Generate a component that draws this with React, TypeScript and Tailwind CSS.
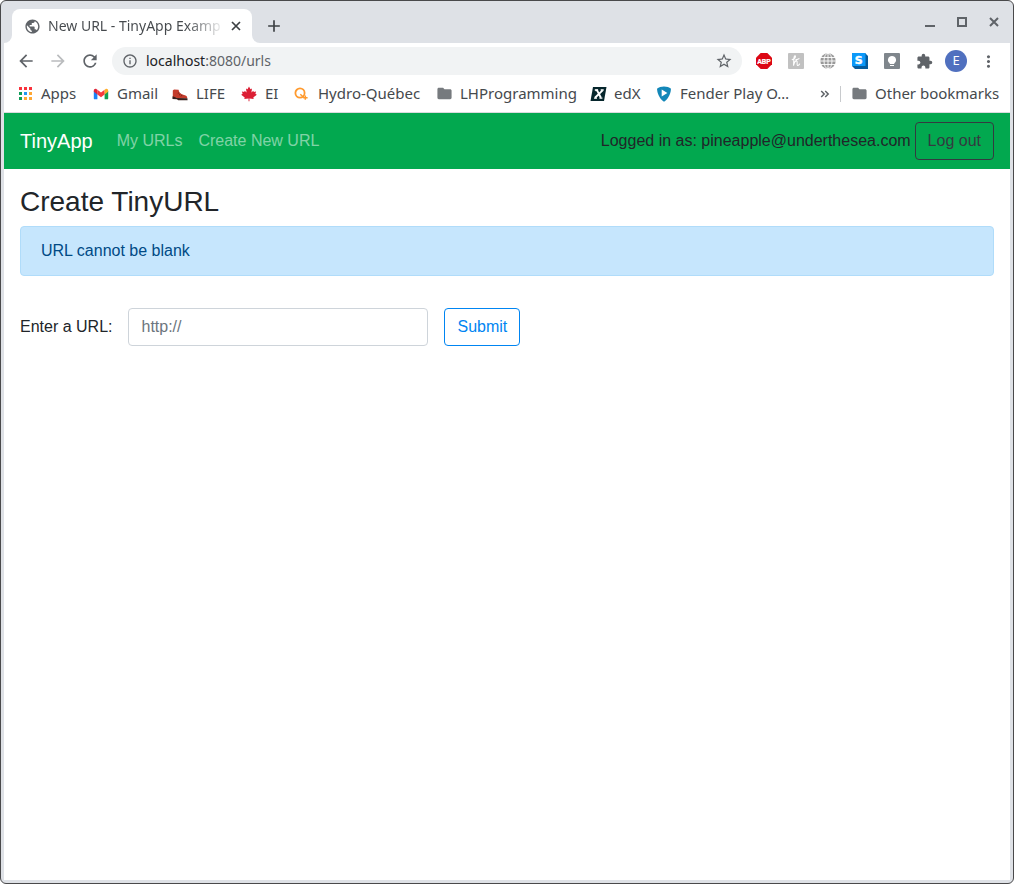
import type { ReactNode } from "react";
import {
  MdAdd,
  MdArrowBack,
  MdArrowForward,
  MdExtension,
  MdFolder,
  MdInfoOutline,
  MdMoreVert,
  MdPublic,
  MdRefresh,
  MdStarBorder,
} from "react-icons/md";

function AppsIcon() {
  const colors = ["#f9323c", "#f9323c", "#f9323c", "#0f9d58", "#2196f3", "#ffa733", "#0f9d58", "#ffa733", "#ffa733"];
  return (
    <svg width="16" height="16" viewBox="0 0 16 16" shapeRendering="crispEdges">
      {colors.map((c, i) => (
        <rect key={i} x={2 + (i % 3) * 5} y={1 + Math.floor(i / 3) * 5} width="3" height="3" fill={c} />
      ))}
    </svg>
  );
}

function GmailIcon() {
  return (
    <svg width="16" height="16" viewBox="0 0 16 16">
      <path d="M.8 5v7.400c0 .5.400.9.900.9h2.700V6.500z" fill="#1a82f5" />
      <path d="M11.600 6.500v6.800h2.700c.5 0 .9-.400.900-.9V5z" fill="#12a152" />
      <path d="M4.400 3.800 8 6.500l3.600-2.700v4.600L8 11.200 4.400 8.400z" fill="#f83a3e" />
      <path d="M11.600 3.800l.8-.6c1.200-.9 2.800 0 2.800 1.500v1L11.600 8.400z" fill="#ffae28" />
      <path d="M4.400 3.800l-.8-.6C2.400 2.300.8 3.200.8 4.700v1l3.600 2.700z" fill="#e02539" />
    </svg>
  );
}

function BootIcon() {
  return (
    <svg width="16" height="16" viewBox="0 0 16 16">
      <path d="M.8 4.400 2 3.600l4.600.1.500 2.100c1 1.700 2.600 2.700 5 3.300 2.200.5 3.100 1.300 3.200 3.200H5.400L.8 11z" fill="#c43c2c" />
      <path d="M.4 10.400c1.400.1 3 .4 4.200 1.500l10.800.3.200 2H6.200l-1.300-.9L.5 13z" fill="#38201d" />
      <path d="M7.200 6.600 5.800 7.500M8.400 8 7 9.200M10.200 8.900 9 10.400" stroke="#6e2019" strokeWidth=".9" />
    </svg>
  );
}

function LeafIcon() {
  return (
    <svg width="16" height="16" viewBox="0 0 16 16">
      <path
        d="M8 .6 9.500 3.300l1.500-.7-.6 4 1.900-1.900.5 1.200 2.300-.3-.7 2.200 1.400.9-3.500 2.900.4 1.400-4.300-.4.100 2.700H7.500l.1-2.700-4.300.4.400-1.400L.2 8.700l1.400-.9L.9 5.600l2.300.3.500-1.200 1.900 1.900-.6-4 1.500.7z"
        fill="#dc1f35"
      />
    </svg>
  );
}

function HydroIcon() {
  return (
    <svg width="16" height="16" viewBox="0 0 16 16" fill="none" stroke="#ff9a2e">
      <circle cx="6" cy="7" r="4.600" strokeWidth="1.800" />
      <path d="M6.300 8.200 9.500 11.200M11.300 9.600v4.200M9.200 11.700h4.400" strokeWidth="1.500" />
    </svg>
  );
}

function EdxIcon() {
  return (
    <svg className="shrink-0" width="17" height="16" viewBox="0 0 17 16">
      <path d="M3 1h13.500L14 15H.500z" fill="#06262c" />
      <path d="M5.600 4.400h1.500l3.800 7.400M12.600 4.400 5 11.800" fill="none" stroke="#fff" strokeWidth="1.900" />
      <path d="M4.800 4h3.300M10.700 4h3M4 12.100h3M9.400 12.100h3" stroke="#fff" strokeWidth="1.300" />
    </svg>
  );
}

function FenderIcon() {
  return (
    <svg width="16" height="16" viewBox="0 0 16 16">
      <path d="M1.200 2.600C4-.1 12-.1 14.800 2.600c.6 3.700-2.600 10.900-6.800 13.100C3.800 13.500.6 6.300 1.200 2.600z" fill="#1387b8" />
      <path d="M5.700 3.600v7L11.400 7z" fill="#fff" />
    </svg>
  );
}

function AdblockIcon() {
  return (
    <svg width="16" height="16" viewBox="0 0 16 16">
      <path d="M4.700 0h6.600L16 4.700v6.600L11.300 16H4.700L0 11.300V4.700z" fill="#dc0714" />
      <text x="8" y="11" textAnchor="middle" fontSize="7" fontWeight="700" fontFamily="Roboto, sans-serif" fill="#fff" stroke="#fff" strokeWidth=".2">
        ABP
      </text>
    </svg>
  );
}

function HoneyIcon() {
  return (
    <svg width="16" height="16" viewBox="0 0 16 16">
      <rect width="16" height="16" rx="1" fill="#c1c1c1" />
      <path
        d="M4.200 6.600C6.300 6.600 8.300 3.300 7.100 2.800 5.500 2.300 5.900 9 5.500 12.700c.7-3.600 1.900-5.100 3.100-4.800 1.500.4-.3 4 .9 4.500.9.300 1.700-.500 2.100-1.300M7.900 6.600c1.300.2 2.300-.2 3.100-.9"
        fill="none"
        stroke="#fff"
        strokeWidth="1.100"
        strokeLinecap="round"
      />
    </svg>
  );
}

function WireGlobeIcon() {
  return (
    <svg width="16" height="16" viewBox="0 0 16 16">
      <circle cx="8" cy="8" r="7.700" fill="#999" />
      <g fill="none" stroke="#fff" strokeWidth=".9">
        <path d="M8 0v16M0 8h16M1 4.500h14M1 11.500h14" />
        <ellipse cx="8" cy="8" rx="4" ry="7.800" />
      </g>
    </svg>
  );
}

function StylusIcon() {
  return (
    <svg width="16" height="16" viewBox="0 0 16 16">
      <path d="M13 0l3 3v13H3l-3-3z" fill="#075c9d" />
      <rect width="13.500" height="13" fill="#0b99fa" />
      <text x="6.800" y="10.500" textAnchor="middle" fontSize="11" fontWeight="700" fontFamily="DejaVu Sans, sans-serif" fill="#fff" stroke="#fff" strokeWidth=".4">
        S
      </text>
    </svg>
  );
}

function BulbIcon() {
  return (
    <svg width="16" height="16" viewBox="0 0 16 16">
      <rect width="16" height="16" rx="1" fill="#7f868c" />
      <path d="M8 3a4 4 0 0 0-2.300 7.300V11h4.600v-.7A4 4 0 0 0 8 3zM6 12h4v1H6z" fill="#fff" />
    </svg>
  );
}

function CrossIcon({ width }: { width: string }) {
  return (
    <svg width="10" height="10" viewBox="0 0 10 10">
      <path d="M1 1l8 8M9 1 1 9" stroke="currentColor" strokeWidth={width} />
    </svg>
  );
}

function IconButton({ label, children }: { label: string; children: ReactNode }) {
  return (
    <button type="button" aria-label={label} className="flex size-8 shrink-0 items-center justify-center">
      {children}
    </button>
  );
}

function Bookmark({ icon, label, width }: { icon: ReactNode; label: string; width: string }) {
  return (
    <a href="#" className={`flex shrink-0 items-center gap-2 whitespace-nowrap ${width}`}>
      <span className="flex w-4 shrink-0 justify-center">{icon}</span>
      {label}
    </a>
  );
}

function TabStrip() {
  return (
    <div className="flex h-[42px] items-end justify-between px-[3px]">
      <div className="flex items-end">
        <div className="size-2 bg-white">
          <div className="size-2 rounded-br-lg bg-[#dee1e6]" />
        </div>
        <div className="flex h-[34px] w-60 items-center rounded-t-lg bg-white pr-2 pl-3">
          <MdPublic size={17} className="shrink-0 text-[#5f6368]" />
          <span className="ml-[7px] bg-linear-to-r from-[#45494d] from-80% to-[#45494d]/10 bg-clip-text text-[14px] leading-5 whitespace-nowrap text-transparent">
            New URL - TinyApp Examp
          </span>
          <button type="button" aria-label="Close tab" className="ml-auto flex size-4 shrink-0 items-center justify-center text-[#3c4043]">
            <CrossIcon width="1.700" />
          </button>
        </div>
        <div className="size-2 bg-white">
          <div className="size-2 rounded-bl-lg bg-[#dee1e6]" />
        </div>
        <button type="button" aria-label="New tab" className="flex h-[34px] w-7 items-center justify-center text-[#3c4043]">
          <MdAdd size={20} />
        </button>
      </div>
      <div className="flex h-[42px] items-center text-[#5f6368]">
        <IconButton label="Minimize">
          <svg width="12" height="12" viewBox="0 0 12 12">
            <path d="M1 9h10v2H1z" fill="currentColor" />
          </svg>
        </IconButton>
        <IconButton label="Maximize">
          <svg width="10" height="10" viewBox="0 0 10 10">
            <path d="M1 1h8v8H1z" fill="none" stroke="currentColor" strokeWidth="2" />
          </svg>
        </IconButton>
        <IconButton label="Close window">
          <CrossIcon width="2" />
        </IconButton>
      </div>
    </div>
  );
}

function Toolbar() {
  return (
    <div className="flex h-9 items-center bg-white px-[6px] text-[#5f6368]">
      <IconButton label="Back">
        <MdArrowBack size={20} />
      </IconButton>
      <IconButton label="Forward">
        <MdArrowForward size={20} className="text-[#babcbe]" />
      </IconButton>
      <IconButton label="Reload">
        <MdRefresh size={20} />
      </IconButton>
      <div className="mx-[6px] flex h-7 min-w-0 flex-1 items-center rounded-full bg-[#f1f3f4] pr-[9px] pl-[10px] text-[14px] leading-5">
        <MdInfoOutline size={16} className="shrink-0" />
        <a href="#" className="ml-2 flex-1 truncate">
          <span className="text-[#202124]">localhost</span>:8080/urls
        </a>
        <button type="button" aria-label="Bookmark this tab" className="flex items-center justify-center">
          <MdStarBorder size={18} />
        </button>
      </div>
      <IconButton label="Adblock Plus">
        <AdblockIcon />
      </IconButton>
      <IconButton label="Honey">
        <HoneyIcon />
      </IconButton>
      <IconButton label="Web translate">
        <WireGlobeIcon />
      </IconButton>
      <IconButton label="Stylus">
        <StylusIcon />
      </IconButton>
      <IconButton label="Keep">
        <BulbIcon />
      </IconButton>
      <IconButton label="Extensions">
        <MdExtension size={17} />
      </IconButton>
      <IconButton label="Profile">
        <span className="flex size-[22px] items-center justify-center rounded-full bg-[#5070bf] text-[13px] text-white">E</span>
      </IconButton>
      <IconButton label="Menu">
        <MdMoreVert size={19} />
      </IconButton>
    </div>
  );
}

function BookmarksBar() {
  return (
    <nav className="flex h-[34px] items-center justify-between border-b border-[#d9dbde] bg-white pr-[14px] pb-1 pl-[13px] text-[15px] text-[#45494d]">
      <div className="flex min-w-0 items-center overflow-hidden">
        <Bookmark icon={<AppsIcon />} label="Apps" width="w-[76px]" />
        <Bookmark icon={<GmailIcon />} label="Gmail" width="w-[79px]" />
        <Bookmark icon={<BootIcon />} label="LIFE" width="w-[69px]" />
        <Bookmark icon={<LeafIcon />} label="EI" width="w-[53px]" />
        <Bookmark icon={<HydroIcon />} label="Hydro-Québec" width="w-[142px]" />
        <Bookmark icon={<MdFolder size={17} className="shrink-0 text-[#767a7e]" />} label="LHProgramming" width="w-[154px]" />
        <Bookmark icon={<EdxIcon />} label="edX" width="w-[66px]" />
        <Bookmark icon={<FenderIcon />} label="Fender Play O…" width="w-[136px]" />
      </div>
      <div className="flex shrink-0 items-center">
        <button type="button" aria-label="More bookmarks" className="mr-[10px]">
          <svg width="10" height="10" viewBox="0 0 10 10" fill="none" stroke="#5f6368" strokeWidth="1.500">
            <path d="M1.200 2l3 3-3 3M5.200 2l3 3-3 3" />
          </svg>
        </button>
        <span className="mr-[10px] h-4 w-px bg-[#c8cacd]" />
        <Bookmark icon={<MdFolder size={17} className="shrink-0 text-[#767a7e]" />} label="Other bookmarks" width="w-[145px]" />
      </div>
    </nav>
  );
}

function AppHeader() {
  return (
    <header className="flex min-h-14 items-center bg-[#02a84f] px-4 py-2 text-[#212529]">
      <a href="#" className="mr-4 text-[20px] leading-[30px] text-white">
        TinyApp
      </a>
      <nav className="flex flex-1 text-white/50">
        <a href="#" className="p-2">
          My URLs
        </a>
        <a href="#" className="p-2">
          Create New URL
        </a>
      </nav>
      <div className="flex items-baseline gap-1">
        <span>Logged in as: pineapple@underthesea.com</span>
        <button type="button" className="rounded border border-[#343a40] px-3 py-[6px] text-[#343a40]">
          Log out
        </button>
      </div>
    </header>
  );
}

function CreateUrl() {
  return (
    <main className="p-4 text-[#212529]">
      <h3 className="mb-2 text-[28px] leading-[33px]">Create TinyURL</h3>
      <div role="alert" className="mb-8 rounded border border-[#b0dcfa] bg-[#c6e6fd] px-5 py-3 text-[#004a85]">
        URL cannot be blank
      </div>
      <form className="flex flex-wrap items-center gap-4" onSubmit={(e) => e.preventDefault()}>
        <label htmlFor="long-url">Enter a URL:</label>
        <input
          id="long-url"
          type="text"
          placeholder="http://"
          className="h-[38px] w-[300px] rounded border border-[#ced4da] px-3 placeholder:text-[#6c757d]"
        />
        <button type="submit" className="rounded border border-[#0085f2] px-3 py-[6px] text-[#0085f2]">
          Submit
        </button>
      </form>
    </main>
  );
}

export default function App() {
  return (
    <div className="min-h-screen bg-white">
      <div className="flex min-h-screen flex-col rounded-md border border-[#49494b] bg-[#dee1e6]">
        <div className="font-['Noto_Sans',sans-serif]">
          <TabStrip />
          <div className="mx-[3px]">
            <Toolbar />
            <BookmarksBar />
          </div>
        </div>
        <div className="mx-[3px] mb-[3px] flex-1 bg-white font-['Liberation_Sans',sans-serif] text-[16px] leading-6">
          <AppHeader />
          <CreateUrl />
        </div>
      </div>
    </div>
  );
}
